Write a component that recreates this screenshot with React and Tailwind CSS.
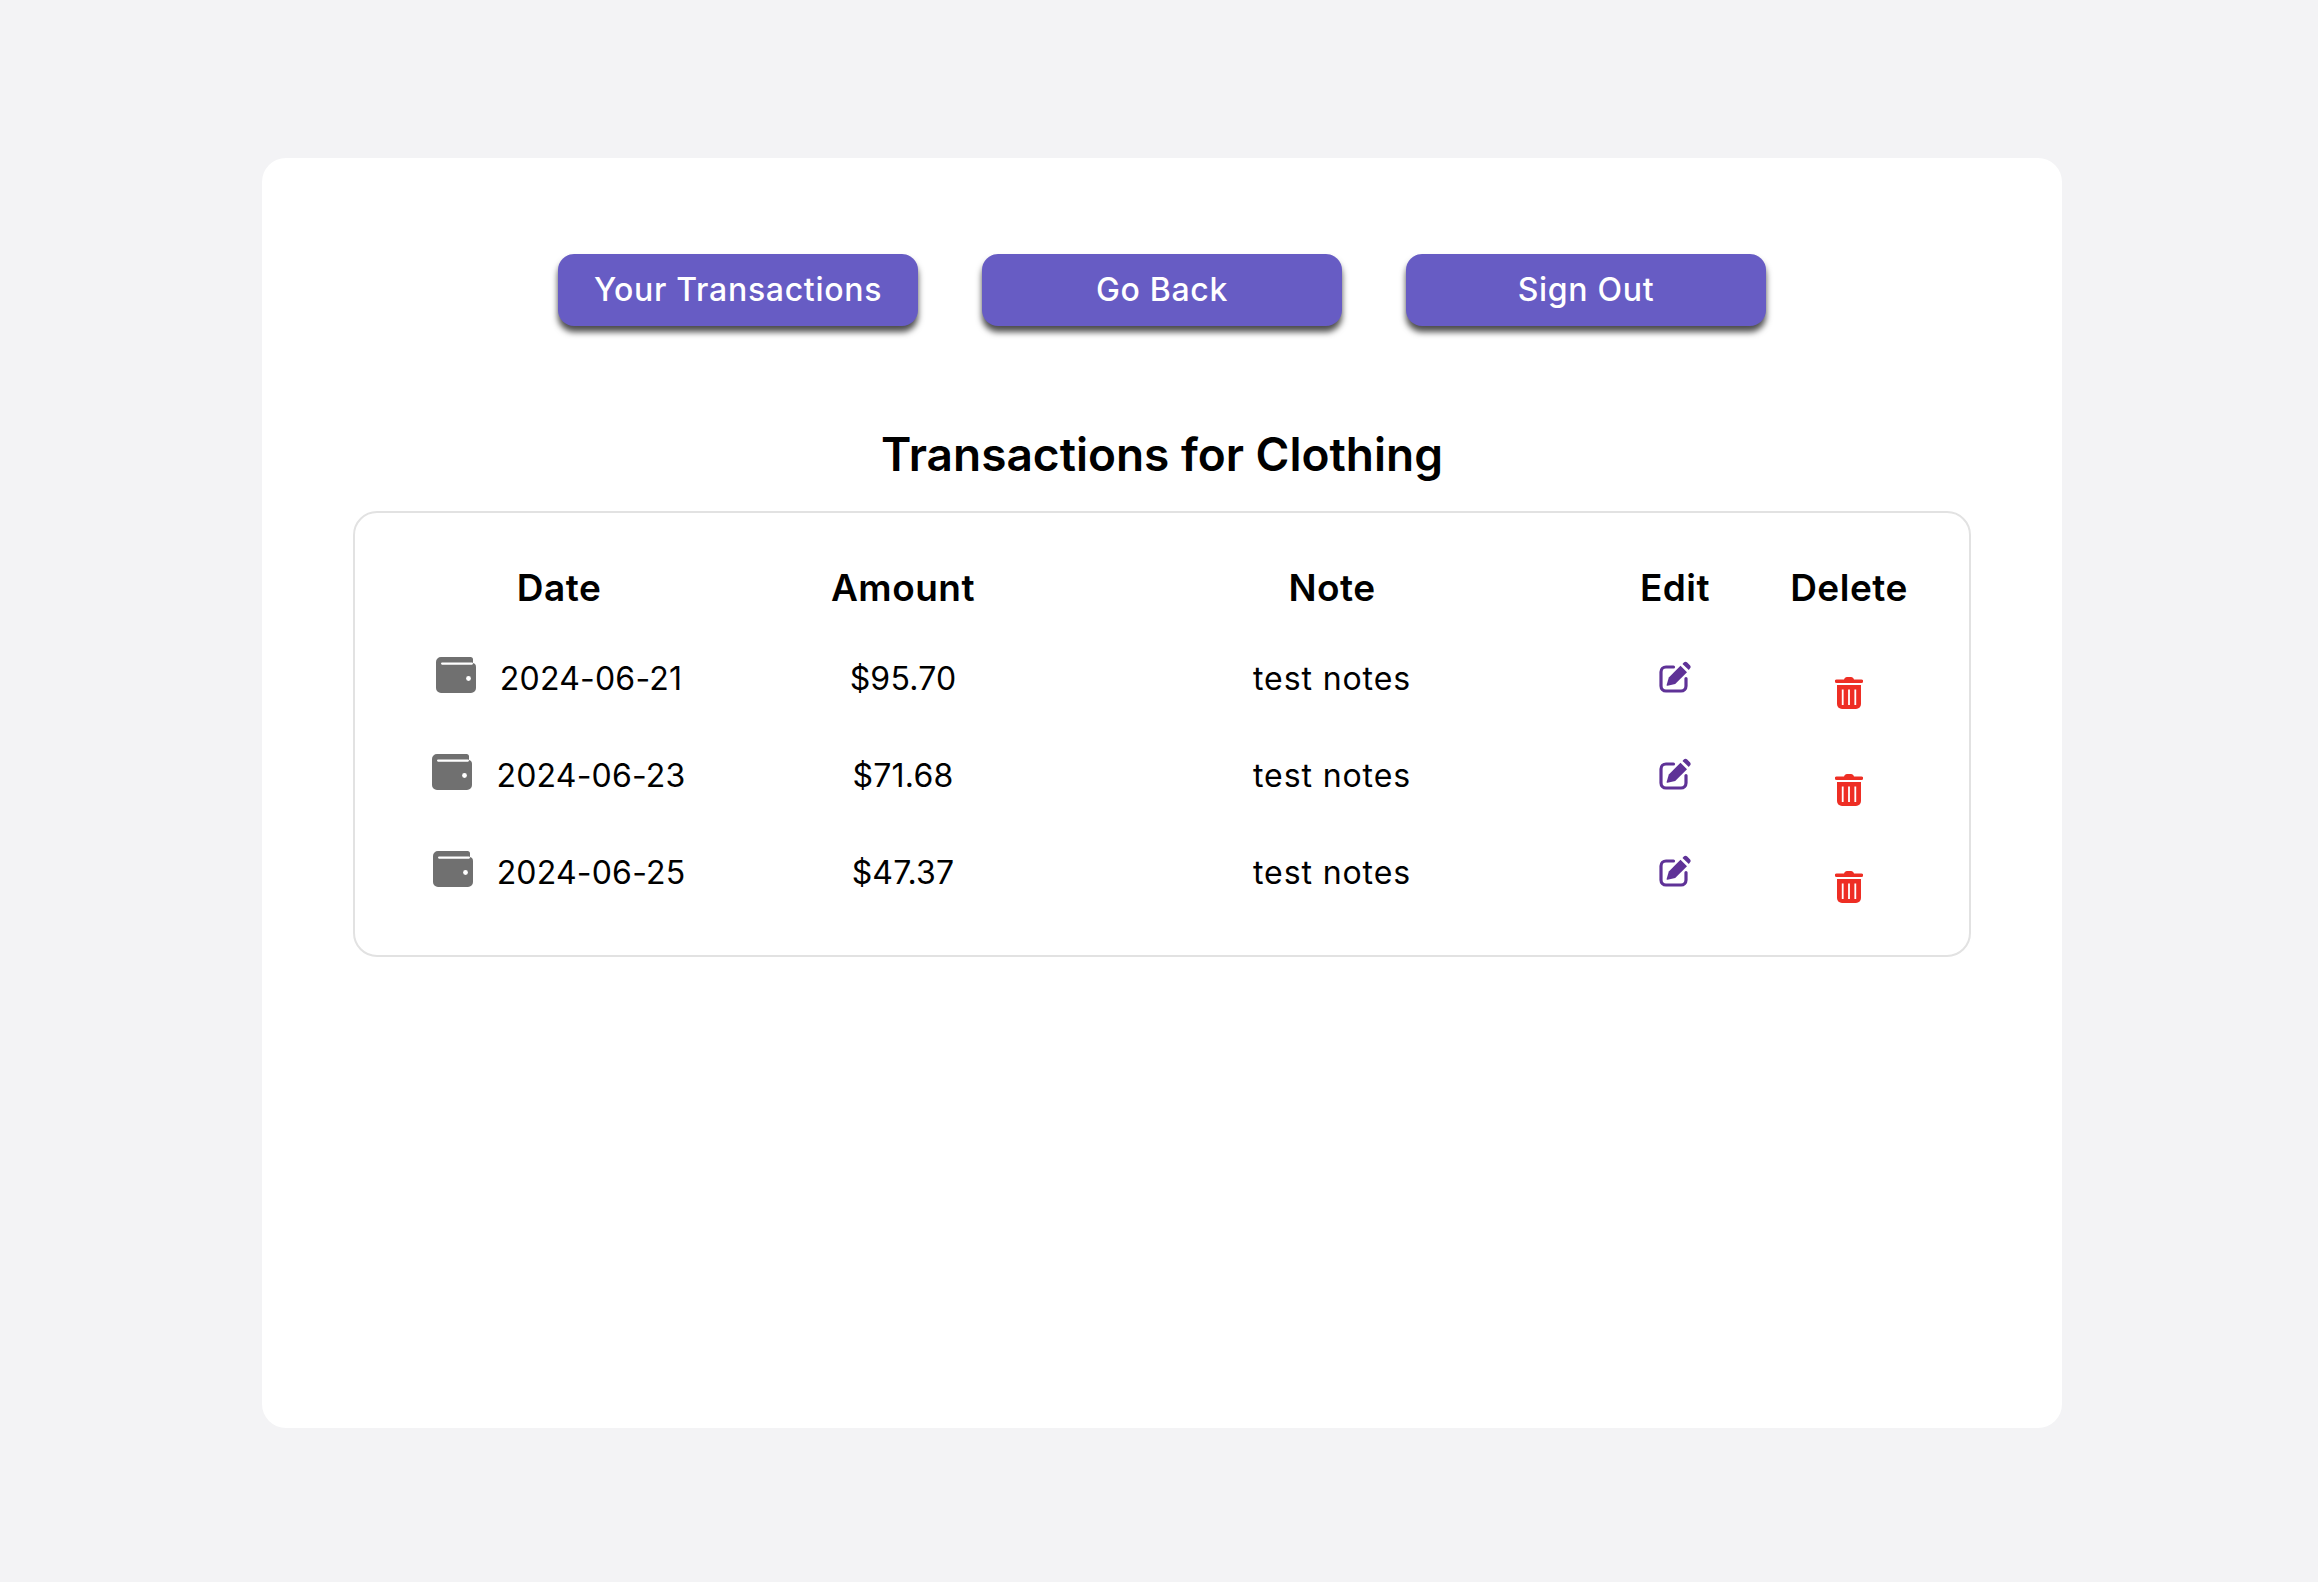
import React from "react";

const rows = [
  { date: "2024-06-21", amount: "$95.70", note: "test notes" },
  { date: "2024-06-23", amount: "$71.68", note: "test notes" },
  { date: "2024-06-25", amount: "$47.37", note: "test notes" },
];

const WalletIcon = () => (
  <svg width="40" height="36" viewBox="0 0 40 36" className="mb-2 shrink-0">
    <path d="M5 0H34.500a2.500 2.500 0 0 1 2.500 2.500V6H36a4 4 0 0 1 4 4V31a5 5 0 0 1-5 5H5a5 5 0 0 1-5-5V5a5 5 0 0 1 5-5Z" fill="#707070" />
    <rect x="5" y="5.500" width="32" height="2.200" rx="1.100" fill="#fff" />
    <circle cx="32.500" cy="21.500" r="2.400" fill="#fff" />
  </svg>
);

const EditIcon = () => (
  <svg width="32" height="32" viewBox="0 0 32 32" className="mb-1">
    <path d="M14.500 6H7a5 5 0 0 0-5 5V25a5 5 0 0 0 5 5h15a5 5 0 0 0 5-5v-7.500" fill="none" stroke="#5f3297" strokeWidth="3.200" strokeLinecap="round" />
    <path d="M8.500 24.800c-.6.100-1-.3-.9-.9L9.800 16.500 21.500 4.800 28 11.300 16.200 23Z" fill="#5f3297" />
    <path d="M23.500 2.900 24.800 1.500c1-1 2.400-1 3.400 0l2.700 2.700c1 1 1 2.400 0 3.400L29.800 9Z" fill="#5f3297" />
  </svg>
);

const TrashIcon = () => (
  <svg width="28" height="32" viewBox="0 0 28 32" className="mt-[28px]">
    <path d="M9 2.500C9.500 1 10.500 0 12 0h4c1.500 0 2.500 1 3 2.500h7.500a1.750 1.750 0 0 1 0 3.500H1.500a1.750 1.750 0 0 1 0-3.500Z" fill="#ee2e24" />
    <path d="M2 8H26V27a5 5 0 0 1-5 5H7a5 5 0 0 1-5-5Z" fill="#ee2e24" />
    <rect x="6.800" y="12.500" width="1.800" height="15.500" fill="#fff" />
    <rect x="13.100" y="12.500" width="1.800" height="15.500" fill="#fff" />
    <rect x="19.400" y="12.500" width="1.800" height="15.500" fill="#fff" />
  </svg>
);

const Button = ({ children }) => (
  <button className="w-[360px] h-[72px] rounded-2xl bg-[#675cc4] text-white text-[32px] font-[450] tracking-[0.7px] shadow-[0_6px_6px_rgba(0,0,0,0.7)]">
    {children}
  </button>
);

export default function App() {
  return (
    <div className="min-h-[1582px] bg-[#f3f3f5] pt-[158px] font-['Inter',sans-serif]">
      <div className="ml-[262px] w-[1800px] h-[1270px] bg-white rounded-3xl pt-[96px] px-[91px]">
        <div className="flex justify-center gap-16">
          <Button>Your Transactions</Button>
          <Button>Go Back</Button>
          <Button>Sign Out</Button>
        </div>

        <h2 className="mt-[96px] text-center text-[46px] leading-[64px] font-semibold text-black">
          Transactions for Clothing
        </h2>

        <div className="mt-[25px] h-[446px] border-2 border-[#e2e2e2] rounded-3xl px-[31px] pt-[33px]">
          <table className="w-[1552px] table-fixed border-collapse text-black">
            <colgroup>
              <col className="w-[346px]" />
              <col className="w-[342px]" />
              <col className="w-[516px]" />
              <col className="w-[170px]" />
              <col className="w-[178px]" />
            </colgroup>
            <thead>
              <tr className="h-[84px] text-[37px] tracking-[0.5px]">
                <th className="font-semibold">Date</th>
                <th className="font-semibold">Amount</th>
                <th className="font-semibold">Note</th>
                <th className="font-semibold">Edit</th>
                <th className="font-semibold">Delete</th>
              </tr>
            </thead>
            <tbody className="text-[32px] tracking-[0.2px] text-center">
              {rows.map((row) => (
                <tr key={row.date} className="h-[97px]">
                  <td>
                    <div className="flex items-center justify-center gap-6">
                      <WalletIcon />
                      <span>{row.date}</span>
                    </div>
                  </td>
                  <td>{row.amount}</td>
                  <td className="tracking-[0.9px]">{row.note}</td>
                  <td>
                    <div className="flex justify-center"><EditIcon /></div>
                  </td>
                  <td>
                    <div className="flex justify-center"><TrashIcon /></div>
                  </td>
                </tr>
              ))}
            </tbody>
          </table>
        </div>
      </div>
    </div>
  );
}
